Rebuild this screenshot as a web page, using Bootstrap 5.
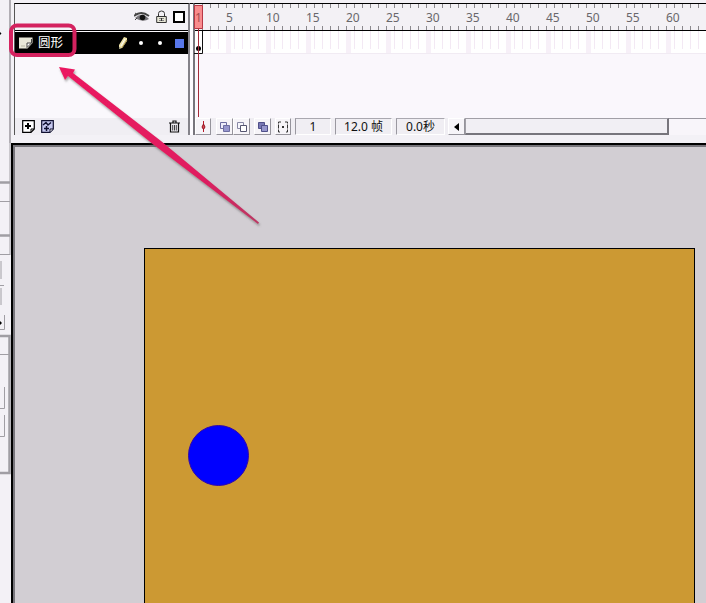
<!DOCTYPE html>
<html lang="zh-CN">
<head>
<meta charset="utf-8">
<meta name="viewport" content="width=device-width, initial-scale=1">
<title>圆形</title>
<link href="https://cdn.jsdelivr.net/npm/bootstrap@5.3.0/dist/css/bootstrap.min.css" rel="stylesheet">
<style>
body{width:706px;height:603px;background:#f3f1f6;font:12px/1 "Noto Sans","Noto Sans CJK SC",sans-serif;color:#111}
svg{display:block;flex:none}
.side{width:11px;flex:none}
.upper{height:143px;padding:3px 0 0 3px}
.layers{width:176px;height:132px;border-left:1px solid #555;border-right:2px solid #85838a;border-top:1px solid #000;background:#faf8fc;flex:none}
.split{width:3px;border-top:1px solid #000;height:132px;background:#fdfbff;flex:none}
.frames{height:132px;border-top:1px solid #000;border-left:2px solid #77757c;background:#faf7fc;min-width:0}
.layer-head{height:27px;border-bottom:1px solid #000;background:#f3f1f6;padding:0 3px 0 119px}
.layer-row{height:22px;margin:1px 0 0 0;background:#000;color:#fff;padding-left:4px}
.layer-name{font-size:12.5px;width:80px;margin-left:4px}
.dot{width:4px;height:4px;border-radius:50%;background:#fff}
.swatch{width:9px;height:9px;background:#5877ea}
.tools{height:17px;background:#f0eef3}
.layer-tools{padding:0 8px 0 7px}
.ruler{height:27px;border-bottom:1px solid #000;color:#69676b;padding:2px 0 0 31px;
 background:repeating-linear-gradient(90deg,transparent 0 7px,#8b898d 7px 8px) 0 0/100% 4px no-repeat,repeating-linear-gradient(90deg,transparent 0 7px,#8b898d 7px 8px) 0 22px/100% 4px no-repeat,#f3f1f5}
.ruler span{width:40px;flex:none;letter-spacing:-.1px}
.cells{height:23px;border-bottom:1px solid #f1ebf3;
 background:repeating-linear-gradient(90deg,transparent 0 31px,#f7f0f8 31px 36px,transparent 36px 40px),repeating-linear-gradient(90deg,transparent 0 7px,#f3e9f4 7px 8px) 0 0/100% 18px no-repeat,#fff}
.playhead{position:absolute;left:194px;top:4px}
.tbtn{height:17px;border-right:1px solid #95939b;border-bottom:1px solid #95939b;border-top:1px solid #fff;border-left:1px solid #fff;background:#f6f4f8;flex:none}
.field{height:17px;border-left:1px solid #9a98a0;border-top:1px solid #aaa8b0;border-right:1px solid #fff;border-bottom:1px solid #fff;background:#f0eef3;flex:none;padding-top:1px}
.thumb{width:204px;height:17px;border:1px solid #a19fa6;border-right:2px solid #77757c;border-bottom:2px solid #77757c;background:#f1eff4;flex:none}
.track{height:17px;border-top:1px solid #9a98a0;background:#f8f5fa}
.work{border-top:2px solid #000;background:#d2ced3}
.work-in{border-top:2px solid #77757b;border-left:2px solid #77757b;padding:101px 0 0 129px}
.stage{width:551px;height:355px;background:#cc9933;border:1px solid #000;border-bottom:0;padding:176px 0 0 43px}
.ball{width:61px;height:61px;border-radius:50%;background:#00f;border:1px solid #3208a8}
.note{position:absolute;left:0;top:0;pointer-events:none}
#editDot{margin-left:11px}
#lockDot{margin-left:15px}
.guide{margin-left:6px}
#centerFrame{width:16px}
#centerFrame+.onion{margin-left:5px!important}
.onion{width:17px}
#markers{width:16px}
#current{width:36px;margin-left:4px}
#rate{width:57px;margin-left:4px}
#elapsed{width:49px;margin-left:4px}
#scrollLeft{width:17px;margin-left:3px}
#edge{width:2px}
</style>
<script src="https://cdn.jsdelivr.net/npm/bootstrap@5.3.0/dist/js/bootstrap.bundle.min.js"></script>
</head>
<body class="overflow-hidden position-relative d-flex">
<aside class="side">
<svg width="11" height="603" fill="none" stroke="#a09ea4">
<path d="M10 0V143" stroke-width="1.6"/><path d="M10 143V255M0 201.500H10M0 254.500H10M1 261V279M0 285.500H4M1 288V305M4.500 315V329.500H0M0 354.500H10M4.500 387V408.500H0M4.500 415V436.500H0"/>
<path d="M0 182.500H10M0 235.500H10M0 336H9.500V473H0" stroke-width="2.500"/><path d="M0 321v4l2-2zM0 32v3l1.500-1.500z" fill="#000" stroke="none"/>
</svg>
</aside>
<main class="flex-grow-1 d-flex flex-column overflow-hidden">
<section class="upper d-flex flex-shrink-0">
 <div class="layers d-flex flex-column">
  <div class="layer-head d-flex align-items-center justify-content-between">
   <svg width="16" height="12"><path d="M0 5Q7-1 15 5" fill="none" stroke="#444" stroke-width="1.800"/><path d="M1 7Q8 0 15 8Q9 12 1 7" fill="#77757a"/><circle cx="8.500" cy="6.500" r="2.800" fill="#111"/><path d="M1 2L4 4M1 9L3 7" stroke="#444"/></svg>
   <svg width="12" height="14" fill="none" stroke="#333"><path d="M2.500 6V3.500Q2.500 1 5.500 1T8.500 3.500V6" /><path d="M.7 6.500H10.300V12.500H.7Z" fill="#e8e7d7"/><path d="M3 8.500H8M3 10.500H8" stroke="#888"/><path d="M5.500 8v3"/></svg>
   <svg width="12" height="12"><path d="M1 1H11V11H1Z" fill="#fff" stroke="#000" stroke-width="2"/></svg>
  </div>
  <div class="layer-row d-flex align-items-center">
   <svg width="15" height="12"><path d="M0 .5H13.500V6L8.500 11.500H0Z" fill="#e9e8d9"/><path d="M12.500 2V6L8 10.500V6H12" fill="#fff" stroke="#444"/><path d="M2 9H6" stroke="#b8b7a4"/></svg>
   <span class="layer-name">圆形</span>
   <svg width="10" height="14"><path d="M6 1L9 2V5L4 12L1 13V9Z" fill="#eee2a8"/><path d="M7 3L3 10" stroke="#fff"/><path d="M9 4L4 12" stroke="#9c8847"/><path d="M1 11v2l2-1z" fill="#887"/></svg>
   <span class="dot" id="editDot"></span><span class="dot" id="lockDot"></span><span class="swatch ms-auto me-1"></span>
  </div>
  <div class="tools layer-tools mt-auto d-flex align-items-center">
   <svg width="13" height="13"><path d="M.7.700H12.300V9L9 12.300H.7Z" fill="#fff" stroke="#000" stroke-width="1.200"/><path d="M12 9H9V12" fill="none" stroke="#000"/><path d="M3 6H9M6 3V9" stroke="#000" stroke-width="2"/></svg>
   <svg class="guide" width="13" height="13"><path d="M.7.700H12.300V9L9 12.300H.7Z" fill="#c6c8ef" stroke="#101030" stroke-width="1.200"/><path d="M12 9H9V12" fill="#fff" stroke="#101030"/><path d="M2 5L5 2.500L7 5L10 2.500M3 8.500H8M5.500 6V11" fill="none" stroke="#101030" stroke-width="1.500"/></svg>
   <svg class="ms-auto" width="11" height="13" fill="none" stroke="#111"><path d="M0 3H11M4 2.500V1H7V2.500M1.500 3.500V12H9.500V3.500" stroke-width="1.200"/><path d="M3.700 5V10.500M5.500 5V10.500M7.300 5V10.500" stroke-width=".8"/></svg>
  </div>
 </div>
 <div class="split"></div>
 <div class="frames flex-grow-1 d-flex flex-column overflow-hidden">
  <div class="ruler d-flex align-items-center overflow-hidden"><span>5</span><span>10</span><span>15</span><span>20</span><span>25</span><span>30</span><span>35</span><span>40</span><span>45</span><span>50</span><span>55</span><span>60</span></div>
  <div class="cells"></div>
  <div class="tools mt-auto d-flex">
   <div class="tbtn d-flex justify-content-center align-items-center" id="centerFrame"><svg width="7" height="13"><path d="M3.500 1V12" stroke="#b71829"/><path d="M3.500 4L5 7L3.500 9.500L2 7Z" fill="#d94b54" stroke="#92111f"/></svg></div>
   <div class="tbtn onion d-flex justify-content-center align-items-center"><svg width="12" height="12" stroke="#6d6da0"><path d="M1.500 1.500H7.500V7.500H1.500Z" fill="#eeeefa"/><path d="M4.500 4.500H10.500V10.500H4.500Z" fill="#9696cd"/></svg></div>
   <div class="tbtn onion d-flex justify-content-center align-items-center"><svg width="12" height="12" stroke="#555570"><path d="M1.500 1.500H7.500V7.500H1.500Z" fill="#f6f6fc" stroke="#8888a5"/><path d="M4.500 4.500H10.500V10.500H4.500Z" fill="#fff"/></svg></div>
   <div class="tbtn onion d-flex justify-content-center align-items-center ms-1"><svg width="12" height="12" stroke="#4f4f89"><path d="M1.500 1.500H7.500V7.500H1.500Z" fill="#7777b4"/><path d="M4.500 4.500H10.500V10.500H4.500Z" fill="#9696cd"/></svg></div>
   <div class="tbtn d-flex justify-content-center align-items-center ms-1" id="markers"><svg width="12" height="12" fill="none" stroke="#333"><path d="M4 1H1.500V11H4M8 1H10.500V11H8" stroke-dasharray="4 1"/><path d="M5 6H7" stroke-width="2"/></svg></div>
   <div class="field d-flex justify-content-center align-items-center" id="current">1</div>
   <div class="field d-flex justify-content-center align-items-center" id="rate">12.0 帧</div>
   <div class="field d-flex justify-content-center align-items-center" id="elapsed">0.0秒</div>
   <div class="tbtn d-flex justify-content-center align-items-center" id="scrollLeft"><svg width="5" height="8"><path d="M5 0V8L0 4Z"/></svg></div>
   <div class="thumb"></div><div class="track flex-grow-1"></div>
  </div>
 </div>
</section>
<section class="work flex-grow-1 d-flex"><div class="bg-black" id="edge"></div><div class="work-in flex-grow-1"><div class="stage"><div class="ball"></div></div></div></section>
</main>
<svg class="playhead" width="10" height="114"><path d="M.5 1.500H8.500V24.500H.5Z" fill="#f98c8e" stroke="#b83846"/><text x="1" y="18" font-size="12" fill="#a44c50">1</text><path d="M8.500 27V49.500H0" fill="none" stroke="#111"/><circle cx="4.500" cy="44.500" r="2.500"/><path d="M4.500 25V113" stroke="#a52b3b"/></svg>
<svg class="note" width="280" height="240">
<defs><linearGradient id="pink" gradientUnits="userSpaceOnUse" x1="60" y1="68" x2="258" y2="223"><stop stop-color="#eb1961"/><stop offset=".7" stop-color="#e01b60"/><stop offset="1" stop-color="#bb3763"/></linearGradient><filter id="shade" x="-10%" y="-10%" width="125%" height="125%"><feDropShadow dx="1" dy="2" stdDeviation="1.200" flood-color="#555" flood-opacity=".55"/></filter></defs>
<rect x="11" y="25.500" width="63.500" height="29.500" rx="6" fill="none" stroke="#d4225f" stroke-width="4"/>
<path d="M59 67L75 69.500L73 73L161 141L259 222.500L258 224L154 145L68 76L65 80Z" fill="url(#pink)" filter="url(#shade)"/>
</svg>
</body>
</html>
